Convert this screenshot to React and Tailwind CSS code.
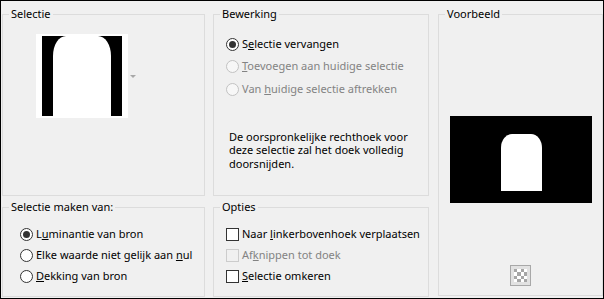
import React from 'react'

function Group({ title, className, children }) {
  return (
    <fieldset className={`border border-[#dcdcdc] ${className}`}>
      <legend className="ml-[6px] px-[2px] leading-[14px]">{title}</legend>
      {children}
    </fieldset>
  )
}

function Radio({ checked, disabled }) {
  return (
    <span
      className={`w-[13px] h-[13px] rounded-full border flex items-center justify-center shrink-0 ${
        disabled ? 'border-[#c2c2c2] bg-[#f7f7f7]' : 'border-[#333333] bg-white'
      }`}
    >
      {checked && <span className="w-[7px] h-[7px] rounded-full bg-[#333333]" />}
    </span>
  )
}

function Check({ disabled }) {
  return (
    <span
      className={`w-[13px] h-[13px] border shrink-0 ${
        disabled ? 'border-[#cccccc] bg-[#f0f0f0]' : 'border-[#333333] bg-white'
      }`}
    />
  )
}

function Row({ control, disabled, className, children }) {
  return (
    <div className={`flex items-center gap-[3px] ${className}`}>
      {control}
      <span className={disabled ? 'text-[#838383]' : 'text-black'}>{children}</span>
    </div>
  )
}

function Checker() {
  const cells = Array.from({ length: 16 }, (_, i) => (Math.floor(i / 4) + i) % 2 === 0)
  return (
    <div className="w-[21px] h-[21px] border border-[#a8a8a8] bg-[#e2e2e2] flex items-center justify-center">
      <div className="grid grid-cols-4 w-[13px] h-[13px]">
        {cells.map((dark, i) => (
          <span key={i} className={dark ? 'bg-[#a6a6a6]' : 'bg-white'} />
        ))}
      </div>
    </div>
  )
}

export default function App() {
  return (
    <div className="w-[604px] h-[299px] border border-black bg-[#f0f0f0] font-['Noto_Sans',sans-serif] text-[11px] text-black flex pl-[1px] gap-[8px] overflow-hidden">
      {/* left column */}
      <div className="w-[203px] flex flex-col pt-[6px]">
        <Group title="Selectie" className="h-[189px]">
          <div className="flex items-center mt-[13px] ml-[33px]">
            <div className="w-[92px] h-[84px] bg-white px-[6px] py-[2px]">
              <div className="w-full h-full bg-black flex justify-center">
                <div className="w-[58px] h-full bg-white rounded-tl-[13px_20px] rounded-tr-[13px_20px]" />
              </div>
            </div>
            <span className="ml-[2px] w-0 h-0 border-l-[3px] border-r-[3px] border-t-[3px] border-l-transparent border-r-transparent border-t-[#a8a8a8]" />
          </div>
        </Group>
        <Group title="Selectie maken van:" className="h-[97px] mt-[4px]">
          <div className="mt-[10px] ml-[17px]">
            <Row control={<Radio checked />} className="h-[21px]">
              L<u>u</u>minantie van bron
            </Row>
            <Row control={<Radio />} className="h-[21px]">
              Elke waarde niet gelijk aan <u>n</u>ul
            </Row>
            <Row control={<Radio />} className="h-[21px]">
              <u>D</u>ekking van bron
            </Row>
          </div>
        </Group>
      </div>

      {/* middle column */}
      <div className="w-[216px] flex flex-col pt-[6px]">
        <Group title="Bewerking" className="h-[189px]">
          <div className="mt-[12px] ml-[12px]">
            <Row control={<Radio checked />} className="h-[22px]">
              S<u>e</u>lectie vervangen
            </Row>
            <Row control={<Radio disabled />} disabled className="h-[23px]">
              <u>T</u>oevoegen aan huidige selectie
            </Row>
            <Row control={<Radio disabled />} disabled className="h-[22px]">
              Van <u>h</u>uidige selectie aftrekken
            </Row>
          </div>
          <p className="mt-[30px] ml-[15px] mr-[10px] leading-[13.4px]">
            De oorspronkelijke rechthoek voor deze selectie zal het doek volledig doorsnijden.
          </p>
        </Group>
        <Group title="Opties" className="h-[97px] mt-[4px]">
          <div className="mt-[10px] ml-[12px]">
            <Row control={<Check />} className="h-[21px]">
              Naar <u>l</u>inkerbovenhoek verplaatsen
            </Row>
            <Row control={<Check disabled />} disabled className="h-[21px]">
              Af<u>k</u>nippen tot doek
            </Row>
            <Row control={<Check />} className="h-[21px]">
              <u>S</u>electie omkeren
            </Row>
          </div>
        </Group>
      </div>

      {/* right column */}
      <div className="flex-1 flex flex-col pt-[6px] pl-[1px]">
        <Group title="Voorbeeld" className="h-[289px] flex flex-col items-center">
          <div className="mt-[95px] w-[142px] h-[87px] bg-black pt-[18px] pl-[51px]">
            <div className="w-[41px] h-[57px] bg-white rounded-tl-[11px_14px] rounded-tr-[11px_14px]" />
          </div>
          <div className="mt-[62px]">
            <Checker />
          </div>
        </Group>
      </div>
    </div>
  )
}
